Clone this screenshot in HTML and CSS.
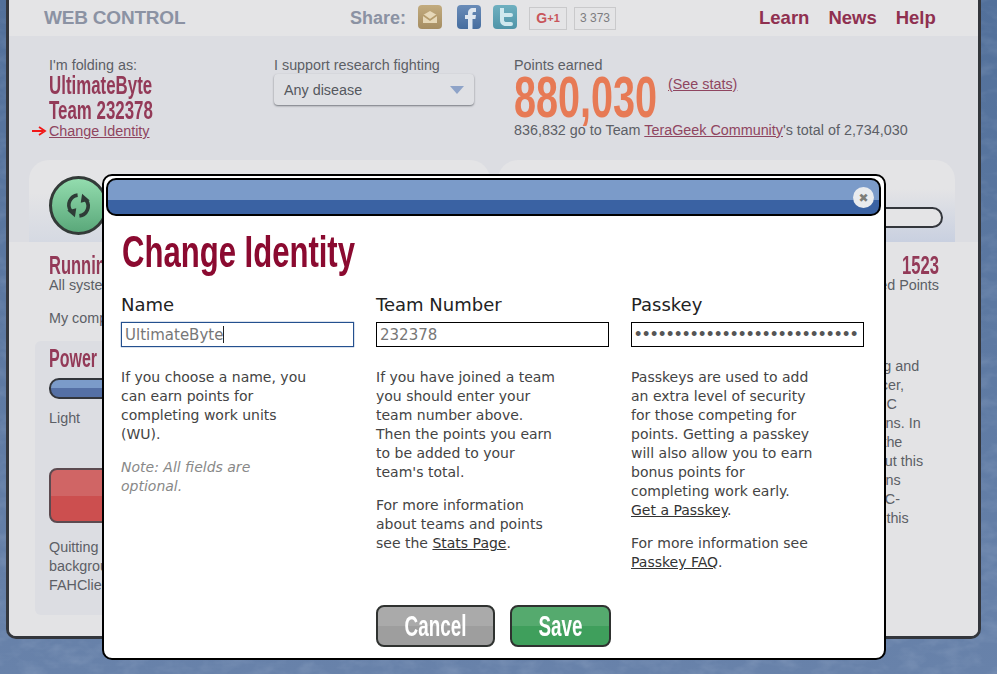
FILE: index.html
```html
<!DOCTYPE html>
<html lang="en">
<head>
  <meta charset="UTF-8">
  <title>Web Control</title>
  <link rel="stylesheet" href="styles.css">
</head>
<body>

  <!-- speckled wallpaper behind the page -->
  <svg class="backdrop" width="997" height="674">
    <filter id="speckle">
      <feTurbulence type="fractalNoise" baseFrequency="0.05 0.09" numOctaves="3" seed="4"/>
      <feColorMatrix values="0 0 0 0 0.85  0 0 0 0 0.9  0 0 0 0 1  0 0 0 1.1 -0.45"/>
    </filter>
    <rect width="997" height="674" filter="url(#speckle)" opacity="0.2"/>
  </svg>

  <div class="app">
    <div class="topbar">
      <div class="brand">WEB CONTROL</div>
      <div class="share">
        <span class="share-label">Share:</span>
        <svg class="share-icon" viewBox="0 0 24 24"><defs><linearGradient id="tan" x2="0" y2="1"><stop offset="0" stop-color="#c2ab7e"/><stop offset="1" stop-color="#a58d62"/></linearGradient></defs><rect width="24" height="24" rx="4" fill="url(#tan)"/><path d="M5 10l7-4 7 4v8H5z" fill="#e6d8b8"/><path d="M5 10l7 5 7-5" fill="none" stroke="#b59c6c" stroke-width="1.6"/></svg>
        <svg class="share-icon" viewBox="0 0 24 24"><defs><linearGradient id="blue" x2="0" y2="1"><stop offset="0" stop-color="#6a8cb8"/><stop offset="1" stop-color="#456d9f"/></linearGradient></defs><rect width="24" height="24" rx="4" fill="url(#blue)"/><path d="M11 24V14H8v-4h3V8C11 5 13 3 16 3h3v4h-2c-1 0-1.500.5-1.500 1.500V10H19l-.6 4h-2.900v10z" fill="#dfe7f0"/></svg>
        <svg class="share-icon" viewBox="0 0 24 24"><defs><linearGradient id="teal" x2="0" y2="1"><stop offset="0" stop-color="#6fb0c0"/><stop offset="1" stop-color="#4f94a8"/></linearGradient></defs><rect width="24" height="24" rx="4" fill="url(#teal)"/><path d="M7 3h4v5h7a2 2 0 0 1 0 4h-7v3c0 1.500 1 2 2.500 2H18a2 2 0 0 1 0 4h-5c-4 0-6-2.500-6-6z" fill="#cfe8ee"/></svg>
        <span class="gplus">G<small>+1</small></span>
        <span class="gcount">3 373</span>
      </div>
      <nav class="nav">
        <a>Learn</a>
        <a>News</a>
        <a>Help</a>
      </nav>
    </div>

    <div class="info">
      <div class="info-id">
        <div>I'm folding as:</div>
        <div class="narrow id-name">UltimateByte</div>
        <div class="narrow id-name">Team 232378</div>
        <div class="id-link">
          <svg class="red-arrow" viewBox="0 0 15 10"><path d="M0 5h11M7 1l6 4-6 4" fill="none" stroke="#f01818" stroke-width="1.800"/></svg>
          <a class="link">Change Identity</a>
        </div>
      </div>
      <div class="info-cause">
        <div>I support research fighting</div>
        <div class="cause-select">Any disease <span class="cause-caret"></span></div>
      </div>
      <div class="info-points">
        <div>Points earned</div>
        <div class="points-row">
          <span class="narrow points-num">880,030</span>
          <a class="link">(See stats)</a>
        </div>
        <div class="points-team">836,832 go to Team <a class="link">TeraGeek Community</a>'s total of 2,734,030</div>
      </div>
    </div>

    <div class="card-heads">
      <div class="card-head">
        <div class="status-circle">
          <svg viewBox="0 0 30 30">
            <g id="spin-half">
              <path d="M14 3.500A11 11 0 0 0 6.500 21" fill="none" stroke="#2e3b36" stroke-width="4"/>
              <path d="M2.500 20.500l10-2.500-1.500 10z" fill="#2e3b36"/>
            </g>
            <use href="#spin-half" transform="rotate(180 15 15)"/>
          </svg>
        </div>
      </div>
      <div class="card-head card-head-right">
        <div class="progress"></div>
      </div>
    </div>

    <div class="lower">
      <div class="lower-left">
        <div class="narrow status-title">Running</div>
        <div class="status-text">All systems</div>
        <div class="status-text computer">My computer</div>
        <div class="power">
          <div class="narrow power-title">Power</div>
          <div class="slider"></div>
          <div class="slider-label">Light</div>
          <div class="quit-btn"></div>
          <p class="quit-text">Quitting<br>background<br>FAHClient</p>
        </div>
      </div>
      <div class="lower-right">
        <div class="narrow ppd">1523</div>
        <div class="ppd-label">Earned Points</div>
        <p class="about">
          <span>the folding and</span>
          <span>from cancer,</span>
          <span>on your PC</span>
          <span>protein runs. In</span>
          <span>news on the</span>
          <span>learn about this</span>
          <span>&amp; donations</span>
          <span>using a PC-</span>
          <span>check on this</span>
        </p>
      </div>
    </div>
  </div>

  <div class="modal">
    <div class="modal-bar">
      <span class="modal-close">&#10006;</span>
    </div>
    <h1 class="narrow modal-title">Change Identity</h1>
    <div class="modal-cols">
      <div class="modal-col">
        <label class="field-label">Name</label>
        <div class="field field-focus">UltimateByte<span class="caret"></span></div>
        <p>If you choose a name, you can earn points for completing work units (WU).</p>
        <p class="note">Note: All fields are optional.</p>
      </div>
      <div class="modal-col">
        <label class="field-label">Team Number</label>
        <div class="field">232378</div>
        <p>If you have joined a team you should enter your team number above.<br>Then the points you earn to be added to your team's total.</p>
        <p>For more information about teams and points see the <a class="plain-link">Stats Page</a>.</p>
      </div>
      <div class="modal-col">
        <label class="field-label">Passkey</label>
        <input class="field field-pass" type="password" value="abcdefghijklmnopqrstuvwxyz12">
        <p>Passkeys are used to add an extra level of security for those competing for points. Getting a passkey will also allow you to earn bonus points for completing work early. <a class="plain-link">Get a Passkey</a>.</p>
        <p>For more information see <a class="plain-link">Passkey FAQ</a>.</p>
      </div>
    </div>
    <div class="modal-actions">
      <button class="btn btn-cancel"><span class="narrow btn-text">Cancel</span></button>
      <button class="btn btn-save"><span class="narrow btn-text">Save</span></button>
    </div>
  </div>

</body>
</html>
```

FILE: styles.css
```css
html, body {
  height: 100%;
}

body {
  margin: 0;
  height: 674px;
  overflow: hidden;
  position: relative;
  font-family: "Liberation Sans", Arial, sans-serif;
  font-size: 14.35px;
  color: #5c5f66;
  background: linear-gradient(to bottom, #52709a, #6882aa);
}

.backdrop {
  position: absolute;
  left: 0;
  top: 0;
}

/* no condensed face installed, so the headings are squeezed */
.narrow {
  display: block;
  font-family: "Liberation Sans", Arial, sans-serif;
  font-weight: bold;
  white-space: nowrap;
  transform-origin: left center;
}

.link {
  color: #8f4560;
  text-decoration: underline;
}

.app {
  position: relative;
  box-sizing: border-box;
  margin-left: 6px;
  width: 975px;
  height: 639px;
  display: flex;
  flex-direction: column;
  border: 3px solid #33363c;
  border-top: none;
  border-radius: 0 0 10px 10px;
  background: #dcdde2;
  overflow: hidden;
}

.topbar {
  height: 36px;
  flex: none;
  display: flex;
  align-items: center;
  background: #e4e4e6;
  padding-left: 35px;
}

.brand {
  width: 306px;
  font-size: 19px;
  font-weight: bold;
  color: #8b92a3;
  letter-spacing: -0.2px;
}

.share {
  display: flex;
  align-items: center;
  width: 409px;
}

.share-label {
  font-size: 18px;
  font-weight: bold;
  color: #8b92a3;
  margin-right: 12px;
}

.share-icon {
  width: 24px;
  height: 24px;
  margin: -2px 15px 0 0;
}

.share-icon + .share-icon {
  margin-right: 12px;
}

.share-icon + .share-icon + .share-icon {
  margin-right: 12px;
}

.gplus, .gcount {
  box-sizing: border-box;
  height: 23px;
  display: flex;
  align-items: center;
  justify-content: center;
  border: 1px solid #c9c9cb;
  font-size: 12px;
  color: #7c7c80;
}

.gplus {
  width: 38px;
  font-weight: bold;
  font-size: 14px;
  color: #c8555a;
  margin-right: 7px;
}

.gplus small {
  font-size: 11px;
}

.gcount {
  width: 42px;
}

.nav {
  display: flex;
  gap: 19px;
  font-size: 18.5px;
  font-weight: bold;
  color: #8f3050;
}

.info {
  height: 124px;
  flex: none;
  display: flex;
  padding: 21px 0 0 40px;
  box-sizing: border-box;
  line-height: 16px;
}

.info-id {
  width: 225px;
}

.id-name {
  font-size: 25px;
  line-height: 25px;
  color: #933a58;
  transform: scaleX(.675);
}

.id-link {
  position: relative;
}

.red-arrow {
  position: absolute;
  left: -17px;
  top: 3px;
  width: 15px;
  height: 10px;
}

.info-cause {
  width: 240px;
}

.cause-select {
  box-sizing: border-box;
  width: 200px;
  height: 31px;
  margin-top: 1px;
  padding: 0 10px;
  display: flex;
  align-items: center;
  justify-content: space-between;
  border-radius: 4px;
  background: #dfe0e4;
  color: #55585e;
  box-shadow: 0 1px 2px #75787f;
}

.cause-caret {
  width: 0;
  height: 0;
  border-left: 7px solid transparent;
  border-right: 7px solid transparent;
  border-top: 8px solid #8ea3c8;
}

.points-row {
  display: flex;
  align-items: flex-start;
  gap: 10px;
}

.points-row .link {
  margin-top: 3px;
}

.points-num {
  width: 144px;
  font-size: 57px;
  line-height: 48px;
  color: #e77a55;
  transform: scaleX(.694);
}

.points-team {
  margin-top: 1px;
}

.card-heads {
  height: 82px;
  flex: none;
  display: flex;
  gap: 8px;
  padding-left: 20px;
}

.card-head {
  box-sizing: border-box;
  width: 461px;
  padding: 16px 0 0 20px;
  border-radius: 20px 20px 0 0;
  background: linear-gradient(to bottom, #e4e4e6 40%, #d5d9e2);
}

.card-head-right {
  width: 457px;
  padding: 47px 12px 0 0;
  background: linear-gradient(to bottom, #e4e4e6 35%, #c9d0e0);
}

.status-circle {
  box-sizing: border-box;
  width: 59px;
  height: 59px;
  display: flex;
  align-items: center;
  justify-content: center;
  border: 3px solid #333a38;
  border-radius: 50%;
  background: linear-gradient(to bottom, #93dcae, #5aa87a);
}

.status-circle svg {
  width: 27px;
  height: 27px;
}

.progress {
  height: 21px;
  box-sizing: border-box;
  border: 2px solid #33363c;
  border-radius: 11px;
  background: #e4e4e6;
}

.lower {
  flex: 1;
  display: flex;
  background: #e3e3e5;
}

.lower-left {
  width: 490px;
  padding: 11px 0 0 40px;
  box-sizing: border-box;
}

.status-title {
  font-size: 25px;
  line-height: 24px;
  color: #933a58;
  transform: scaleX(.66);
}

.status-text {
  line-height: 16px;
}

.computer {
  margin-top: 17px;
}

.power {
  box-sizing: border-box;
  width: 430px;
  height: 274px;
  margin: 15px 0 0 -14px;
  padding: 5px 0 0 14px;
  border-radius: 6px;
  background: #dcdde2;
}

.power-title {
  font-size: 25px;
  line-height: 24px;
  color: #933a58;
  transform: scaleX(.64);
}

.slider {
  box-sizing: border-box;
  width: 300px;
  height: 21px;
  margin-top: 8px;
  border: 2px solid #33363c;
  border-radius: 10px;
  background: linear-gradient(to bottom, #7b9bc9 50%, #5570a5 50%);
}

.slider-label {
  margin-top: 11px;
  line-height: 16px;
}

.quit-btn {
  box-sizing: border-box;
  width: 300px;
  height: 55px;
  margin-top: 42px;
  border: 2px solid #5c4a50;
  border-radius: 8px;
  background: linear-gradient(to bottom, #d06565 50%, #cc4f4f 50%);
}

.quit-text {
  margin: 15px 0 0;
  line-height: 19px;
}

.lower-right {
  flex: 1;
  padding: 11px 39px 0 8px;
  box-sizing: border-box;
  min-width: 0;
}

.ppd {
  text-align: right;
  font-size: 25px;
  line-height: 24px;
  color: #933a58;
  transform: scaleX(.665);
  transform-origin: right center;
}

.ppd-label {
  text-align: right;
  line-height: 16px;
}

.about {
  margin: 64px 0 0 318px;
  line-height: 19px;
  white-space: nowrap;
}

.about span {
  display: block;
}

.modal {
  position: absolute;
  left: 102px;
  top: 174px;
  box-sizing: border-box;
  width: 784px;
  height: 486px;
  padding: 2px 3px 0 2px;
  background: #fff;
  border: 2px solid #000;
  border-radius: 10px;
  font-family: "DejaVu Sans", Verdana, sans-serif;
  font-size: 14px;
  color: #444;
}

.modal-bar {
  box-sizing: border-box;
  height: 38px;
  position: relative;
  border: 2px solid #000;
  border-radius: 10px;
  background: linear-gradient(to bottom, #7b9bc9 58%, #3a62a3 58%);
}

.modal-close {
  position: absolute;
  right: 5px;
  top: 7px;
  width: 21px;
  height: 21px;
  border-radius: 50%;
  display: flex;
  align-items: center;
  justify-content: center;
  background: #e9ebee;
  color: #7d7d78;
  font-size: 12px;
}

.modal-title {
  margin: 13px 0 0 16px;
  font-size: 44px;
  line-height: 46px;
  color: #8b0a30;
  transform: scaleX(.706);
}

.modal-cols {
  display: flex;
  gap: 23px;
  margin: 20px 0 0 15px;
}

.modal-col {
  width: 232px;
}

.modal-col p {
  margin: 0 0 14px;
  width: 188px;
  line-height: 19px;
}

.field-label {
  display: block;
  font-size: 18px;
  line-height: 20px;
  color: #222;
}

.field {
  box-sizing: border-box;
  display: block;
  width: 233px;
  height: 25px;
  margin: 7px 0 21px;
  padding: 0 3px;
  border: 1px solid #000;
  font-family: "DejaVu Sans", Verdana, sans-serif;
  font-size: 15px;
  line-height: 24px;
  color: #777;
}

.field-focus {
  border-color: #24508f;
  box-shadow: 0 0 1px #24508f;
}

.field-pass {
  font-family: "Liberation Sans", Arial, sans-serif;
  font-size: 18px;
  letter-spacing: 1.7px;
  color: #555;
  outline: none;
}

.caret {
  display: inline-block;
  width: 1px;
  height: 17px;
  margin-bottom: -3px;
  background: #222;
}

.note {
  color: #888;
  font-style: italic;
}

.plain-link {
  color: #333;
  text-decoration: underline;
}

.modal-actions {
  position: absolute;
  left: 272px;
  bottom: 11px;
  display: flex;
  gap: 15px;
}

.btn {
  box-sizing: border-box;
  height: 42px;
  padding: 0;
  border: 2px solid #2f3230;
  border-radius: 8px;
  cursor: pointer;
}

.btn-text {
  color: #fff;
  font-size: 29px;
  line-height: 36px;
  transform: scaleX(.65);
  transform-origin: center;
}

.btn-cancel {
  width: 119px;
  background: linear-gradient(to bottom, #aaaaaa 50%, #9e9e9e 50%);
}

.btn-save {
  width: 101px;
  background: linear-gradient(to bottom, #55aa6e 50%, #3f9f5c 50%);
}
```
